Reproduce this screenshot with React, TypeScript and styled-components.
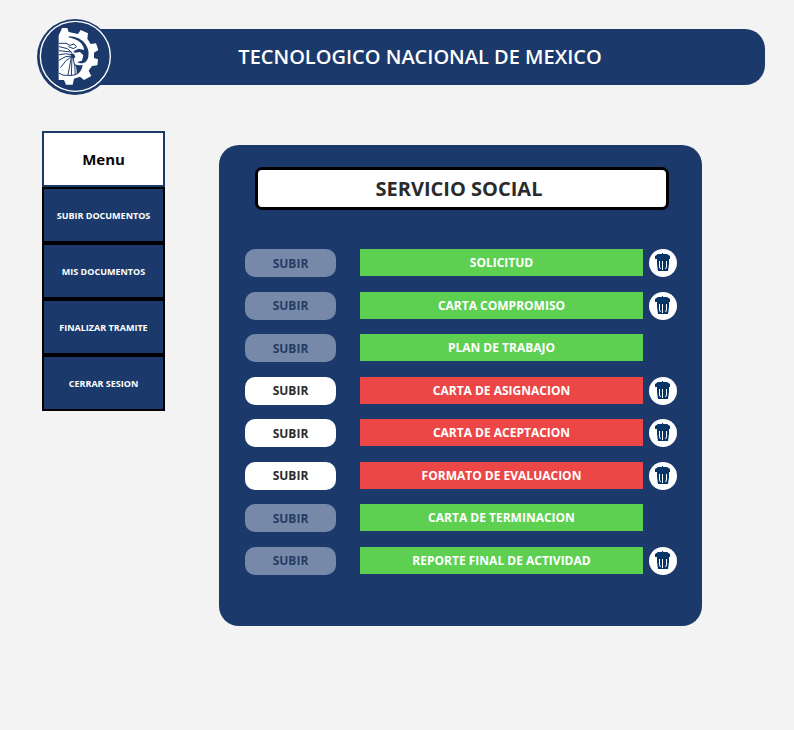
import React from "react";
import styled, { createGlobalStyle } from "styled-components";

const NAVY = "#1b3a6b";

const GlobalStyle = createGlobalStyle`
  * { box-sizing: border-box; }
  body {
    margin: 0;
    background: #f3f3f3;
    font-family: "Segoe UI", "Open Sans", "Noto Sans", sans-serif;
    font-weight: 700;
  }
  button { font: inherit; cursor: pointer; }
  button:disabled { cursor: default; }
`;

const Page = styled.div`
  display: flex;
  flex-direction: column;
  gap: 36px;
  padding: 19px 29px 40px 37px;
`;

const Header = styled.header`
  display: flex;
  align-items: center;
`;

const LogoSvg = styled.svg`
  flex: none;
  width: 76px;
  height: 76px;
  margin-right: -38px;
  z-index: 1;
`;

const Banner = styled.div`
  flex: 1;
  display: flex;
  align-items: center;
  justify-content: center;
  min-height: 56px;
  border-radius: 20px;
  background: ${NAVY};
`;

const BannerTitle = styled.h1`
  margin: 0;
  font-size: 20px;
  line-height: 28px;
  font-weight: 650;
  color: #fff;
`;

const Body = styled.div`
  display: grid;
  grid-template-columns: 123px minmax(0, 1fr);
  align-items: start;
  gap: 54px;
  padding: 0 63px 0 5px;
`;

const Menu = styled.nav`
  display: flex;
  flex-direction: column;
`;

const MenuTitle = styled.h2`
  display: flex;
  align-items: center;
  justify-content: center;
  height: 56px;
  margin: 0;
  border: 2px solid ${NAVY};
  background: #fff;
  color: #0a0508;
  font-size: 15px;
  line-height: 20px;
`;

const MenuButton = styled.button`
  height: 56px;
  padding: 0;
  border: 2px solid #000;
  background: ${NAVY};
  color: #fff;
  && { font-size: 9px; }
`;

const Panel = styled.main`
  display: flex;
  flex-direction: column;
  gap: 39px;
  margin-top: 14px;
  padding: 22px 25px 51px 26px;
  border-radius: 20px;
  background: ${NAVY};
`;

const PanelTitle = styled.h2`
  margin: 0 8px 0 10px;
  padding-right: 6px;
  border: 3px solid #000;
  border-radius: 7px;
  background: #fff;
  color: #2b2b2b;
  font-size: 20px;
  line-height: 37px;
  text-align: center;
`;

const DocumentList = styled.ul`
  display: flex;
  flex-direction: column;
  justify-content: space-between;
  min-height: 326px;
  margin: 0;
  padding: 0;
  list-style: none;
`;

const DocumentRow = styled.li`
  display: grid;
  grid-template-columns: 91px minmax(0, 1fr) 28px;
  align-items: start;
`;

const UploadButton = styled.button`
  height: 28px;
  padding: 0;
  border: 0;
  border-radius: 10px;
  background: #fff;
  color: #2b2b2b;
  && { font-size: 12px; }

  &:disabled {
    background: #7789a8;
    color: #243c63;
  }
`;

const DocumentName = styled.div<{ $done: boolean }>`
  height: 27px;
  margin: 0 6px 0 24px;
  background: ${({ $done }) => ($done ? "#5dd052" : "#ec4646")};
  color: #fff;
  font-size: 12px;
  line-height: 27px;
  text-align: center;
`;

const DeleteButton = styled.button`
  display: flex;
  width: 28px;
  height: 28px;
  padding: 0;
  border: 0;
  border-radius: 50%;
  background: #fff;
`;

const Logo = () => (
  <LogoSvg viewBox="0 0 228 228" role="img" aria-label="Tecnologico Nacional de Mexico">
    <circle cx="114" cy="114" r="114" fill={NAVY} />
    <circle cx="115" cy="112" r="105" fill="none" stroke="#fff" strokeWidth="4" />
    <g transform="translate(45 9)">
      <path
        fill="#fff"
        d="M20 40 L26 28 L30 18 H46 L50 30 L78 36 L86 24 L108 34 L106 50 L116 66 L132 64 L139 84 L126 92 V108 L138 112 L136 130 L120 132 L110 146 L118 162 L96 174 L84 164 L66 170 L62 188 H42 L36 174 H20 Z"
      />
      <path
        fill={NAVY}
        d="M50 43 Q84 44 100 66 Q113 84 109 104 Q106 118 96 122 Q84 126 76 120 L90 116 L94 100 L84 90 L68 92 L64 88 L80 80 L96 84 Q94 56 50 46 Z"
      />
      <path fill={NAVY} d="M68 126 Q78 132 92 128 Q90 148 72 160 Q78 146 68 126 Z" />
      <g fill="none" stroke={NAVY} strokeWidth="3" strokeLinecap="round">
        <path d="M22 64 H42 L54 70 L66 66 L74 74 L64 80 L50 74 M22 74 L46 80 L60 92 M22 86 L56 90 M22 98 Q42 92 58 98" />
        <path d="M22 114 Q40 100 58 102 M26 136 Q40 114 58 104 M48 158 L58 106 M58 160 L60 108 M70 158 Q70 134 64 110" />
        <path d="M22 154 Q32 162 44 160 Q60 162 70 158" />
      </g>
      <path fill={NAVY} d="M56 94 L66 96 L70 104 L64 112 L58 104 Z" />
    </g>
  </LogoSvg>
);

const TrashIcon = () => (
  <svg viewBox="0 0 28 28" width="28" height="28" aria-hidden="true">
    <path
      fill="#063566"
      d="M13 4h1v1h4l3 2v3h-1v5l-1 7H9L8 15v-5H6V7l3-2h4z"
    />
    <path fill="none" stroke="#fff" strokeWidth="1" d="M10.5 12v6l1 2M13.5 12v9M17.5 12v6l-1 2" />
  </svg>
);

const menuItems = ["SUBIR DOCUMENTOS", "MIS DOCUMENTOS", "FINALIZAR TRAMITE", "CERRAR SESION"];

const documents = [
  { name: "SOLICITUD", done: true, removable: true },
  { name: "CARTA COMPROMISO", done: true, removable: true },
  { name: "PLAN DE TRABAJO", done: true, removable: false },
  { name: "CARTA DE ASIGNACION", done: false, removable: true },
  { name: "CARTA DE ACEPTACION", done: false, removable: true },
  { name: "FORMATO DE EVALUACION", done: false, removable: true },
  { name: "CARTA DE TERMINACION", done: true, removable: false },
  { name: "REPORTE FINAL DE ACTIVIDAD", done: true, removable: true },
];

export default function App() {
  return (
    <>
      <GlobalStyle />
      <Page>
        <Header>
          <Logo />
          <Banner>
            <BannerTitle>TECNOLOGICO NACIONAL DE MEXICO</BannerTitle>
          </Banner>
        </Header>
        <Body>
          <Menu aria-label="Menu">
            <MenuTitle>Menu</MenuTitle>
            {menuItems.map((item) => (
              <MenuButton key={item}>{item}</MenuButton>
            ))}
          </Menu>
          <Panel>
            <PanelTitle>SERVICIO SOCIAL</PanelTitle>
            <DocumentList>
              {documents.map((doc) => (
                <DocumentRow key={doc.name}>
                  <UploadButton disabled={doc.done} aria-label={`SUBIR ${doc.name}`}>
                    SUBIR
                  </UploadButton>
                  <DocumentName $done={doc.done}>{doc.name}</DocumentName>
                  {doc.removable && (
                    <DeleteButton aria-label={`Eliminar ${doc.name}`}>
                      <TrashIcon />
                    </DeleteButton>
                  )}
                </DocumentRow>
              ))}
            </DocumentList>
          </Panel>
        </Body>
      </Page>
    </>
  );
}
